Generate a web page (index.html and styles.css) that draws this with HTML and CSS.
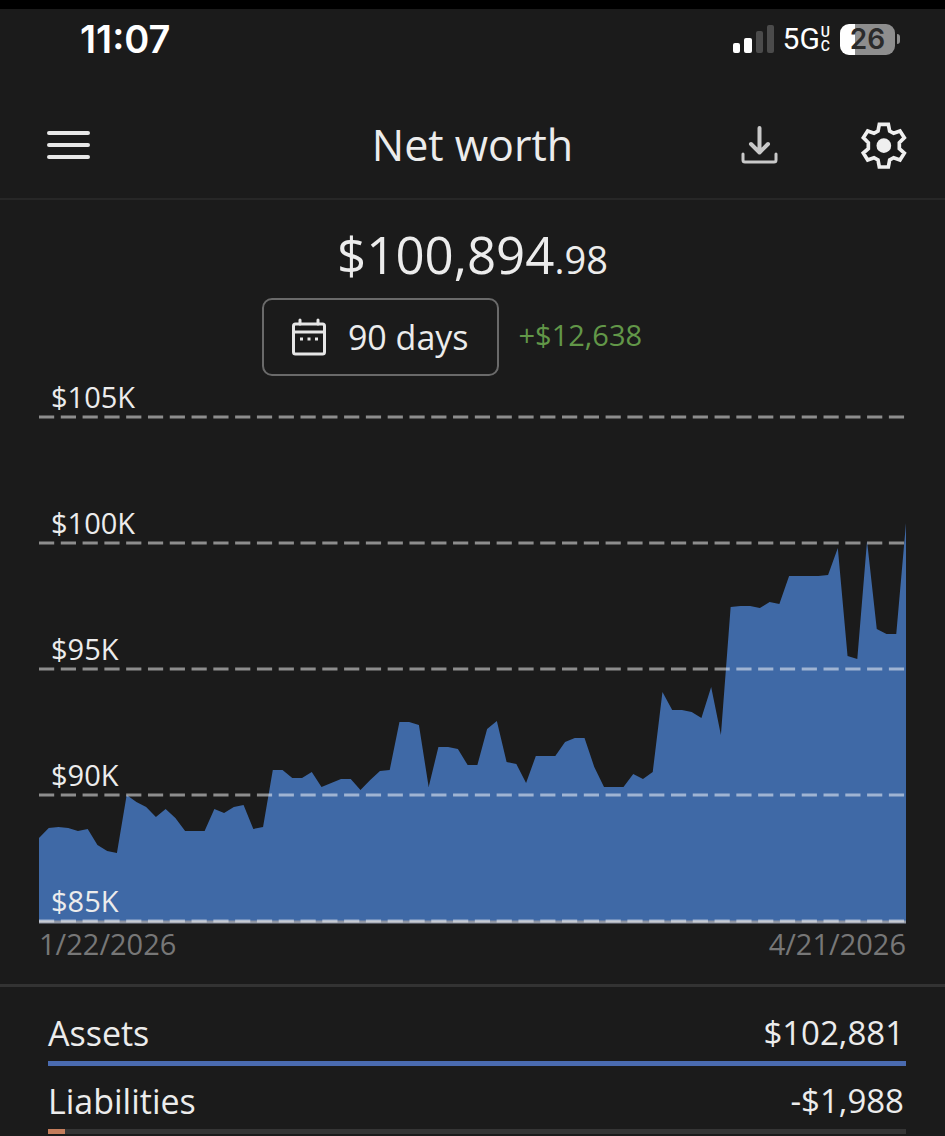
FILE: index.html
```html
<!DOCTYPE html>
<html lang="en">
<head>
    <meta charset="UTF-8">
    <meta name="viewport" content="width=device-width, initial-scale=1">
    <title>Net worth</title>
    <link rel="stylesheet" href="styles.css">
</head>
<body>
    <!-- Status bar -->
    <div class="status-bar">
        <span class="clock">11:07</span>
        <div class="status-icons">
            <svg class="signal" viewBox="0 0 42 28" aria-hidden="true">
                <rect x="1" y="18" width="7" height="10" rx="2" fill="#fff"/>
                <rect x="12" y="13" width="8" height="15" rx="2" fill="#fff"/>
                <rect x="24" y="6" width="7" height="22" rx="2" fill="#4b4b4b"/>
                <rect x="35" y="0" width="7" height="28" rx="2" fill="#4b4b4b"/>
            </svg>
            <span class="network">5G</span>
            <span class="network-type"><span>U</span><span>C</span></span>
            <span class="battery">26</span>
            <span class="battery-cap"></span>
        </div>
    </div>

    <!-- Header -->
    <header class="header">
        <button type="button" class="icon-button menu-button" aria-label="Menu">
            <svg width="43" height="28" viewBox="0 0 43 28" stroke="#e8e8e8" stroke-width="4" stroke-linecap="round">
                <path d="M2 2H41M2 14H41M2 26H41"/>
            </svg>
        </button>
        <h1>Net worth</h1>
        <div class="header-actions">
            <button type="button" class="icon-button" aria-label="Download">
                <svg width="37" height="38" viewBox="0 0 37 38" fill="none" stroke="#c9c9c9" stroke-width="3" stroke-linecap="round" stroke-linejoin="round">
                    <path stroke-width="4" d="M18.500 2V26M10 18L18.500 26.500L27 18"/>
                    <path d="M2 28V34Q2 36 4 36H33Q35 36 35 34V28"/>
                </svg>
            </button>
            <button type="button" class="icon-button" aria-label="Settings">
                <svg width="46" height="47" viewBox="0 0 138 141" fill="none" stroke="#efefef" stroke-width="11">
                    <path d="M55 7H82L86 27L98 34L117 27L130 47L115 62V80L130 93L117 114L98 107L86 114L82 135H55L51 114L39 107L20 114L7 93L22 80V62L7 47L20 27L39 34L51 27Z"/>
                    <circle cx="68.500" cy="71" r="22" fill="#efefef" stroke="none"/>
                </svg>
            </button>
        </div>
    </header>

    <main>
        <!-- Total and period -->
        <section class="summary">
            <p class="total">$100,894<span class="cents">.98</span></p>
            <div class="period">
                <button type="button" class="period-button">
                    <svg width="34" height="38" viewBox="0 0 34 38" fill="none" stroke="#e6e6e6" stroke-width="3" stroke-linejoin="round">
                        <rect x="1.500" y="6" width="31" height="30" rx="2"/>
                        <path d="M1.500 14H32.500"/>
                        <path stroke-linecap="round" d="M8 2V6M26 2V6"/>
                        <path d="M8 21H11M15.500 21H18.500M23 21H26"/>
                    </svg>
                    90 days
                </button>
                <span class="change">+$12,638</span>
            </div>
        </section>

        <!-- Chart: one x unit per day, 126 y units per $5K -->
        <section class="chart">
            <div class="plot">
                <svg class="plot-area" viewBox="0 0 89 504" preserveAspectRatio="none" role="img" aria-label="Net worth over 90 days">
                    <polygon class="area" points="0,504 0,421 1,411 2,410 3,411 4,414 5,412 6,428 7,434 8,436 9,378 10,385 11,390 12,400 13,392 14,401 15,414 16,414 17,414 18,392 19,396 20,390 21,388 22,412 23,410 24,353 25,353 26,361 27,361 28,355 29,370 30,366 31,362 32,362 33,373 34,363 35,354 36,353 37,305 38,305 39,308 40,370 41,330 42,330 43,332 44,348 45,348 46,312 47,304 48,345 49,347 50,366 51,339 52,339 53,339 54,325 55,321 56,321 57,350 58,370 59,370 60,370 61,357 62,362 63,355 64,275 65,293 66,293 67,295 68,301 69,270 70,318 71,190 72,189 73,189 74,191 75,185 76,187 77,159 78,159 79,159 80,159 81,158 82,131 83,239 84,242 85,124 86,212 87,217 88,217 89,106 89,504"/>
                    <path class="axis" d="M0 505H89"/>
                    <path class="grid-lines" d="M0 0H89M0 126H89M0 252H89M0 378H89M0 504H89"/>
                </svg>
                <div class="scale">
                    <span>$105K</span>
                    <span>$100K</span>
                    <span>$95K</span>
                    <span>$90K</span>
                    <span>$85K</span>
                </div>
            </div>
            <div class="dates">
                <span>1/22/2026</span>
                <span>4/21/2026</span>
            </div>
        </section>

        <!-- Balances -->
        <section class="balances">
            <div class="balance">
                <div class="balance-text"><span>Assets</span><span class="amount">$102,881</span></div>
                <div class="bar"><div class="bar-fill assets" style="width: 100%"></div></div>
            </div>
            <div class="balance">
                <div class="balance-text"><span>Liabilities</span><span class="amount">-$1,988</span></div>
                <div class="bar"><div class="bar-fill liabilities" style="width: 2%"></div></div>
            </div>
        </section>
    </main>
</body>
</html>
```
FILE: styles.css
```css
* { box-sizing: border-box; }
body { margin: 0; border-top: 9px solid #000; background: #1b1b1b; color: #ececec; font-family: "Open Sans", sans-serif; font-size: 34px; }
h1, p { margin: 0; font-weight: 400; }
button { background: none; color: inherit; font: inherit; cursor: pointer; }
svg { display: block; }

/* Status bar */
.status-bar { display: flex; justify-content: space-between; align-items: center; height: 60px; margin-bottom: 23px; padding: 0 45px 0 80px; color: #fff; font-family: Inter, sans-serif; }
.clock { font-size: 38px; font-weight: 600; }
.status-icons { display: flex; align-items: center; }
.signal { width: 42px; height: 28px; margin-right: 9px; }
.network { font-family: Roboto, sans-serif; font-size: 30px; line-height: 30px; }
.network-type { display: flex; flex-direction: column; margin: 0 10px 0 1px; font-family: Roboto, sans-serif; font-size: 14px; font-weight: 500; line-height: 14px; }
.battery { width: 55px; height: 31px; border-radius: 9px; background: linear-gradient(to right, #fff 15px, #8e8e8e 15px); color: #2b2b2b; font-size: 28px; font-weight: 600; line-height: 31px; text-align: center; }
.battery-cap { width: 3px; height: 10px; margin-left: 2px; border-radius: 0 3px 3px 0; background: #8e8e8e; }

/* Header */
.header { display: grid; grid-template-columns: 1fr auto 1fr; align-items: center; height: 108px; padding: 0 38px; border-bottom: 2px solid #272727; }
.header h1 { font-size: 43px; line-height: 60px; }
.header-actions { display: flex; justify-content: flex-end; align-items: center; gap: 83px; }
.icon-button { justify-self: start; padding: 0; border: none; }
.menu-button { padding-left: 9px; }

/* Total and period */
.summary { padding-top: 24px; }
.total { font-size: 51px; line-height: 60px; text-align: center; }
.cents { font-size: 38px; line-height: 38px; }
.period { display: flex; justify-content: center; align-items: center; gap: 20px; margin-top: 14px; padding-right: 41px; }
.period-button { display: flex; align-items: center; gap: 22px; height: 78px; padding: 0 28px; border: 2px solid #6a6a6a; border-radius: 10px; }
.change { padding-bottom: 4px; color: #629748; font-size: 29px; line-height: 36px; }

/* Chart */
.chart { padding: 3px 39px 22px; border-bottom: 3px solid #333; }
.plot { display: grid; height: 542px; }
.plot-area { grid-area: 1 / 1; align-self: end; width: 100%; height: 504px; overflow: visible; }
.area { fill: #3f69a6; }
.axis { fill: none; stroke: #8f96a5; stroke-width: 3; }
.grid-lines { fill: none; stroke: #fff; stroke-opacity: 0.5; stroke-width: 3; stroke-dasharray: 1.56 0.677; }
.scale { grid-area: 1 / 1; display: flex; flex-direction: column; justify-content: space-between; padding: 0 0 2px 12px; font-size: 29px; line-height: 36px; }
.dates { display: flex; justify-content: space-between; margin-top: 5px; color: #777; font-size: 29px; line-height: 36px; }

/* Balances */
.balances { padding: 23px 39px 0 48px; }
.balance { margin-bottom: 12px; }
.balance-text { display: flex; justify-content: space-between; padding-right: 2px; line-height: 46px; }
.amount { font-size: 33px; }
.bar { height: 5px; margin-top: 5px; background: #353535; }
.bar-fill { height: 100%; }
.assets { background: #4a6bb0; }
.liabilities { background: #c47d5c; }
```
